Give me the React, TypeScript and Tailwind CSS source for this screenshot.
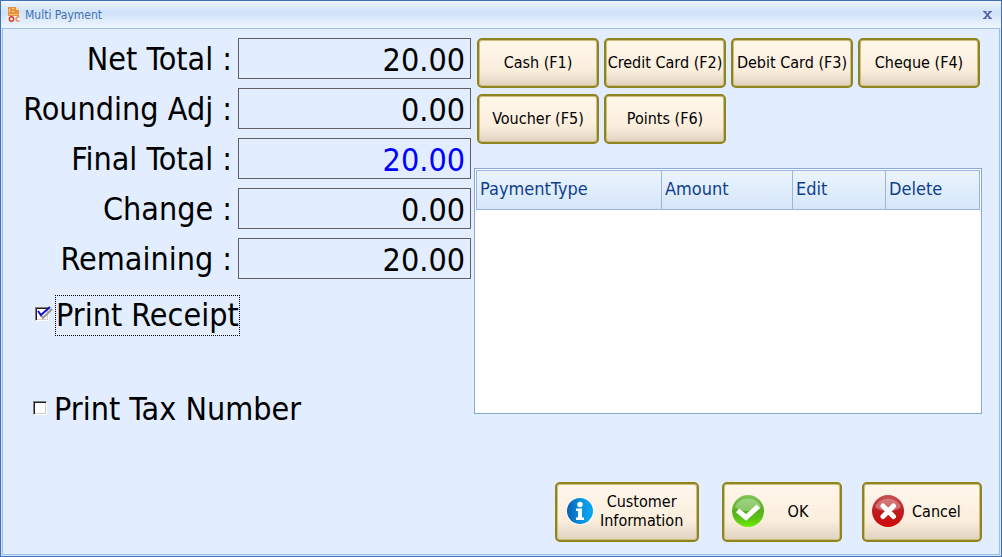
import { useState } from "react";

const font = "font-['DejaVu_Sans_Condensed','Noto_Sans',sans-serif]";

const totals = [
  { id: "net", label: "Net Total :", value: "20.00", color: "text-black" },
  { id: "rounding", label: "Rounding Adj :", value: "0.00", color: "text-black" },
  { id: "final", label: "Final Total :", value: "20.00", color: "text-[#0000ff]" },
  { id: "change", label: "Change :", value: "0.00", color: "text-black" },
  { id: "remaining", label: "Remaining :", value: "20.00", color: "text-black" },
];

const methods = [
  "Cash (F1)",
  "Credit Card (F2)",
  "Debit Card (F3)",
  "Cheque (F4)",
  "Voucher (F5)",
  "Points (F6)",
];

const goldButton =
  "rounded-[5px] border-2 border-[#8f8520] bg-linear-to-b from-[#fff6eb] via-[#fbeedd] via-65% to-[#e0d2bf] pb-0.5 text-base leading-[19px] text-black shadow-[inset_0_0_0_1px_#cdbf7c]";

function AppIcon() {
  return (
    <svg width="14" height="16" viewBox="0 0 14 16" aria-hidden="true">
      <path d="M1 0h8l3 3v7H1z" fill="#e8913a" />
      <path d="M9 0v3h3z" fill="#fbe0b8" />
      <path d="M2 2h1v3H2zM5 1h2v1H5zM5 4h2v1H5z" fill="#fbd596" />
      <path d="M2 7h9v1H2z" fill="#f7c27c" />
      <path d="M0 9h13v6H0z" fill="#f6f1f0" />
      <circle cx="4.500" cy="12" r="2.200" fill="none" stroke="#d03c28" strokeWidth="1.400" />
      <path d="M12.500 10H11a2 2 0 0 0 0 4h1.500" fill="none" stroke="#e08a60" strokeWidth="1.400" />
    </svg>
  );
}

function InfoIcon() {
  return (
    <svg width="28" height="28" viewBox="0 0 28 28" aria-hidden="true">
      <defs>
        <linearGradient id="info" x1="0" x2="1">
          <stop offset="0" stopColor="#0a5fb4" />
          <stop offset="0.55" stopColor="#0b93e0" />
          <stop offset="1" stopColor="#0aa6f0" />
        </linearGradient>
      </defs>
      <circle cx="14" cy="14" r="14" fill="#ffffff" />
      <circle cx="14" cy="14" r="13" fill="url(#info)" />
      <circle cx="14" cy="7.500" r="2.700" fill="#ffffff" />
      <path d="M10 11.500h6v9h2V23h-8v-2.500h2V14h-2z" fill="#ffffff" />
    </svg>
  );
}

function OkIcon() {
  return (
    <svg width="32" height="32" viewBox="0 0 32 32" aria-hidden="true">
      <defs>
        <linearGradient id="ok" x1="0" x2="0" y1="0" y2="1">
          <stop offset="0" stopColor="#7fc45a" />
          <stop offset="0.5" stopColor="#55b020" />
          <stop offset="0.75" stopColor="#5cc414" />
          <stop offset="1" stopColor="#6cf004" />
        </linearGradient>
      </defs>
      <circle cx="16" cy="16" r="16" fill="url(#ok)" />
      <path d="M3 12a13.500 11.500 0 0 1 26 0q-4 4-13 4T3 12z" fill="#ffffff" opacity="0.3" />
      <path d="M7.500 17l6.500 5.500L24.500 13" fill="none" stroke="#ffffff" strokeWidth="5" strokeLinecap="square" />
    </svg>
  );
}

function CancelIcon() {
  return (
    <svg width="32" height="32" viewBox="0 0 32 32" aria-hidden="true">
      <defs>
        <linearGradient id="cancel" x1="0" x2="0" y1="0" y2="1">
          <stop offset="0" stopColor="#c45050" />
          <stop offset="0.5" stopColor="#bc1c20" />
          <stop offset="1" stopColor="#d00a0a" />
        </linearGradient>
      </defs>
      <circle cx="16" cy="16" r="16" fill="url(#cancel)" />
      <path d="M3 12a13.500 11.500 0 0 1 26 0q-4 4-13 4T3 12z" fill="#ffffff" opacity="0.3" />
      <path d="M11 11l10.500 10.500M21.500 11L11 21.500" fill="none" stroke="#ffffff" strokeWidth="5" strokeLinecap="round" />
    </svg>
  );
}

type CheckProps = { id: string; checked: boolean; onChange: (v: boolean) => void };

function CheckBox({ id, checked, onChange }: CheckProps) {
  return (
    <span className="relative mb-1 flex size-[14px] shrink-0">
      <input
        id={id}
        type="checkbox"
        checked={checked}
        onChange={(e) => onChange(e.target.checked)}
        className="size-[14px] appearance-none border border-t-[#808080] border-r-white border-b-white border-l-[#808080] bg-white shadow-[inset_1px_1px_0_#202020,inset_-1px_-1px_0_#d8ccc8] outline-none"
      />
      {checked && (
        <svg
          className="pointer-events-none absolute top-0 left-0 overflow-visible"
          width="18"
          height="14"
          viewBox="0 0 18 14"
          aria-hidden="true"
        >
          <path d="M5 7l3 4 9-9" fill="none" stroke="#9a9494" strokeWidth="2" />
          <path d="M3 4l3 4 9-8" fill="none" stroke="#1010c8" strokeWidth="2" />
        </svg>
      )}
    </span>
  );
}

export default function App() {
  const [receipt, setReceipt] = useState(true);
  const [taxNumber, setTaxNumber] = useState(false);

  return (
    <div className={`flex min-h-screen flex-col border border-[#3f71b3] bg-[#d5e5fa] px-px pb-px ${font}`}>
      <header className="-mx-px flex h-[27px] items-center gap-1 bg-linear-to-b from-[#eef5fe] via-[#cfe2f8] via-40% to-[#eef5fe] px-[6px]">
        <AppIcon />
        <h1 className="flex-1 text-xs text-[#3f71b3]">Multi Payment</h1>
        <button type="button" aria-label="Close" className="flex h-5 w-4 items-center justify-center">
          <svg width="9" height="8" viewBox="0 0 9 8" aria-hidden="true">
            <path d="M0 .5h3.500M5.500.5H9M0 7.500h3.500M5.500 7.500H9" stroke="#5561a8" />
            <path d="M1.500.5l6 7M7.500.5l-6 7" stroke="#5561a8" strokeWidth="1.800" />
          </svg>
        </button>
      </header>

      <main className="flex flex-1 flex-col justify-between border border-[#9bbfe8] bg-[#e2eeff] pt-[9px] pr-[17px] pb-3">
        <div className="flex gap-[3px]">
          <section className="w-[468px] shrink-0">
            <div className="flex flex-col gap-[9px]">
              {totals.map((t) => (
                <div key={t.id} className="flex items-center gap-1.5">
                  <label htmlFor={t.id} className="flex-1 text-right text-[32px] leading-10 text-black">
                    {t.label}
                  </label>
                  <input
                    id={t.id}
                    readOnly
                    defaultValue={t.value}
                    className={`h-[41px] w-[233px] border border-[#606060] bg-transparent px-[5px] pt-0.5 text-right text-[32px] outline-none ${t.color}`}
                  />
                </div>
              ))}
            </div>

            <div className="mt-4 flex items-center gap-1.5 pl-8">
              <CheckBox id="receipt" checked={receipt} onChange={setReceipt} />
              <label htmlFor="receipt" className="border border-dotted border-black text-[32px] leading-[39px] text-black">
                Print Receipt
              </label>
            </div>
            <div className="mt-[54px] flex items-center gap-[7px] pl-[30px]">
              <CheckBox id="tax" checked={taxNumber} onChange={setTaxNumber} />
              <label htmlFor="tax" className="text-[32px] leading-[39px] text-black">
                Print Tax Number
              </label>
            </div>
          </section>

          <section className="flex min-w-0 flex-1 flex-col">
            <div className="grid grid-cols-4 gap-x-[5px] gap-y-1.5 pr-0.5 pl-[3px]">
              {methods.map((m) => (
                <button key={m} type="button" className={`h-[50px] whitespace-nowrap ${goldButton}`}>
                  {m}
                </button>
              ))}
            </div>

            <div className="mt-6 h-[246px] border border-[#86a9d6] bg-white p-px">
              <table className="w-full table-fixed border-collapse">
                <thead>
                  <tr className="h-[39px] bg-linear-to-b from-[#ebf4fe] to-[#d5e6f9] text-left text-lg text-[#0f3f8c]">
                    <th className="w-[185px] border border-[#9ab6dd] px-[3px] pb-0.5 font-normal">PaymentType</th>
                    <th className="w-[131px] border border-[#9ab6dd] px-[3px] pb-0.5 font-normal">Amount</th>
                    <th className="w-[93px] border border-[#9ab6dd] px-[3px] pb-0.5 font-normal">Edit</th>
                    <th className="border border-[#9ab6dd] px-[3px] pb-0.5 font-normal">Delete</th>
                  </tr>
                </thead>
                <tbody />
              </table>
            </div>
          </section>
        </div>

        <footer className="flex justify-end">
          <button
            type="button"
            className={`mr-[23px] flex h-[60px] w-[144px] items-center gap-1.5 pl-[9px] ${goldButton}`}
          >
            <InfoIcon />
            <span>
              Customer
              <br />
              Information
            </span>
          </button>
          <button type="button" className={`mr-5 flex h-[60px] w-[120px] items-center pl-2 ${goldButton}`}>
            <OkIcon />
            <span className="flex-1 pr-2">OK</span>
          </button>
          <button type="button" className={`flex h-[60px] w-[120px] items-center gap-2 pl-2 ${goldButton}`}>
            <CancelIcon />
            <span>Cancel</span>
          </button>
        </footer>
      </main>
    </div>
  );
}
